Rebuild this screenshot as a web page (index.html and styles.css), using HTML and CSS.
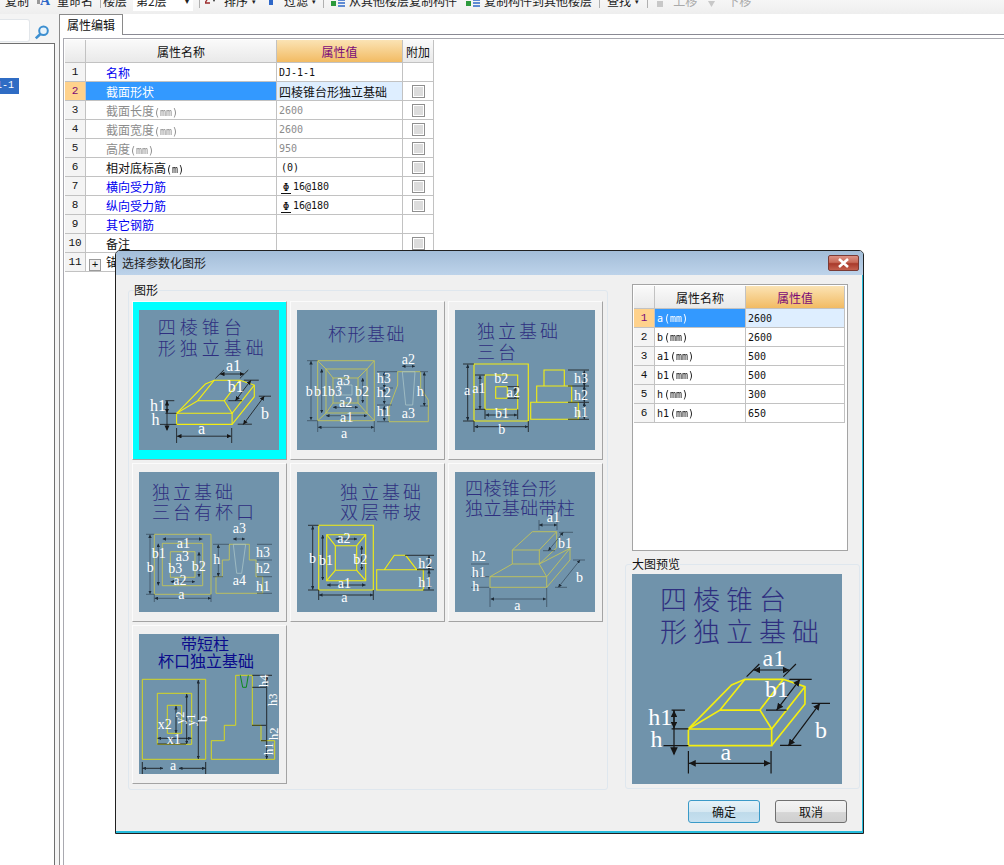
FILE: index.html
```html
<!DOCTYPE html>
<html lang="zh">
<head>
<meta charset="utf-8">
<title>选择参数化图形</title>
<link rel="stylesheet" href="styles.css">
</head>
<body>
<svg class="defs" width="0" height="0"><defs>
<marker id="ar" viewBox="0 0 6 6" refX="6" refY="3" markerWidth="4.5" markerHeight="4.5" orient="auto-start-reverse" markerUnits="userSpaceOnUse"><path d="M0 0L6 3L0 6Z" fill="#161616"/></marker>
<marker id="as" viewBox="0 0 6 6" refX="6" refY="3" markerWidth="3.5" markerHeight="3.5" orient="auto-start-reverse" markerUnits="userSpaceOnUse"><path d="M0 0L6 3L0 6Z" fill="#1d2a36"/></marker>
</defs></svg>

<div class="toolbar">
  <span class="tb ml5">复制</span>
  <svg class="ic ml8" width="15" height="13" viewBox="0 0 15 13"><text class="ic-a" x="3" y="11">A</text><rect x="0" y="5" width="3" height="5" fill="#999"/></svg>
  <span class="tb ml5">重命名</span>
  <i class="sep ml7"></i>
  <span class="tb ml2">楼层</span>
  <span class="select ml6">第2层<b class="caret">▾</b></span>
  <i class="sep ml6"></i>
  <svg class="ic ml5" width="12" height="13" viewBox="0 0 12 13"><path d="M0 1H5L0 9H5" fill="none" stroke="#9c2b2b" stroke-width="1.3"/><path d="M7 4H11L9 8Z" fill="#222"/></svg>
  <span class="tb ml7">排序</span><span class="mini">▾</span>
  <svg class="ic ml10" width="6" height="12" viewBox="0 0 6 12"><rect x="1" y="0" width="4" height="10" fill="#2f68c8"/></svg>
  <span class="tb ml10">过滤</span><span class="mini">▾</span>
  <i class="sep ml5"></i>
  <svg class="ic ml6" width="15" height="12" viewBox="0 0 15 12"><path d="M1 6H6V11H1Z" fill="#2c9a3c"/><path d="M8 2H15M8 5H15M8 8H15M8 11H15" stroke="#2f68c8" stroke-width="1.6"/></svg>
  <span class="tb ml4">从其他楼层复制构件</span>
  <svg class="ic ml8" width="15" height="12" viewBox="0 0 15 12"><path d="M1 6H6V11H1Z" fill="#2c9a3c"/><path d="M8 2H15M8 5H15M8 8H15M8 11H15" stroke="#2f68c8" stroke-width="1.6"/></svg>
  <span class="tb ml4">复制构件到其他楼层</span>
  <i class="sep ml7"></i>
  <span class="tb ml7">查找</span><span class="mini">▾</span>
  <i class="sep ml6"></i>
  <svg class="ic ml9" width="6" height="6" viewBox="0 0 6 6"><rect width="6" height="6" fill="#c8c8c8"/></svg>
  <span class="tb off ml10">上移</span>
  <svg class="ic ml11" width="7" height="6" viewBox="0 0 7 6"><path d="M0 0H7L3.5 6Z" fill="#c8c8c8"/></svg>
  <span class="tb off ml12">下移</span>
</div>

<div class="workspace">
  <aside class="left">
    <div class="search">
      <div class="search-input"></div>
      <svg class="lens" width="16" height="15" viewBox="0 0 16 15"><circle cx="9.5" cy="5.8" r="4.3" fill="#e8f3fb" stroke="#3d8fd0" stroke-width="2"/><path d="M6.4 9L1.8 13.4" stroke="#3d8fd0" stroke-width="2.6"/></svg>
    </div>
    <div class="tree"><div class="tree-sel">DJ-1-1</div></div>
  </aside>
  <div class="gutter"></div>
  <main class="main">
    <div class="tabs"><div class="tab">属性编辑</div></div>
    <div class="panel">
      <table class="grid big">
        <colgroup><col class="c-n"><col class="c-name"><col class="c-val"><col class="c-add"></colgroup>
        <tr class="hd"><td></td><td>属性名称</td><td class="hv">属性值</td><td>附加</td></tr>
        <tr><td class="n">1</td><td class="nm blue">名称</td><td class="v">DJ-1-1</td><td></td></tr>
        <tr class="sel"><td class="n">2</td><td class="nm">截面形状</td><td class="v cjk">四棱锥台形独立基础</td><td><i class="chk"></i></td></tr>
        <tr class="dis"><td class="n">3</td><td class="nm">截面长度<span class="lat">(mm)</span></td><td class="v">2600</td><td><i class="chk"></i></td></tr>
        <tr class="dis"><td class="n">4</td><td class="nm">截面宽度<span class="lat">(mm)</span></td><td class="v">2600</td><td><i class="chk"></i></td></tr>
        <tr class="dis"><td class="n">5</td><td class="nm">高度<span class="lat">(mm)</span></td><td class="v">950</td><td><i class="chk"></i></td></tr>
        <tr><td class="n">6</td><td class="nm">相对底标高<span class="lat">(m)</span></td><td class="v ind">(0)</td><td><i class="chk"></i></td></tr>
        <tr><td class="n">7</td><td class="nm blue">横向受力筋</td><td class="v"><span class="rebar">Φ</span>16@180</td><td><i class="chk"></i></td></tr>
        <tr><td class="n">8</td><td class="nm blue">纵向受力筋</td><td class="v"><span class="rebar">Φ</span>16@180</td><td><i class="chk"></i></td></tr>
        <tr><td class="n">9</td><td class="nm blue">其它钢筋</td><td class="v"></td><td></td></tr>
        <tr><td class="n">10</td><td class="nm">备注</td><td class="v"></td><td><i class="chk"></i></td></tr>
        <tr><td class="n">11</td><td class="exp"><i class="plus">+</i><span class="exp-t">锚固搭接</span></td><td class="v"></td><td></td></tr>
      </table>
    </div>
  </main>
</div>

<section class="dialog">
  <header class="titlebar">
    <span>选择参数化图形</span>
    <button class="close" type="button"><svg width="15" height="10" viewBox="0 0 15 10"><path d="M3 1L12 9M12 1L3 9" stroke="#fff" stroke-width="2.6"/></svg></button>
  </header>
  <div class="dlg-main">
    <fieldset class="group shapes">
      <legend>图形</legend>
      <div class="cards">
        <div class="card on">
          <svg class="pic" viewBox="0 0 140 140"><g id="d1">
            <rect width="140" height="140" fill="#7093ab"/>
            <text class="tt s5" x="18.7" y="24">四棱锥台</text><text class="tt s5" x="18.7" y="45">形独立基础</text>
            <g class="y2"><path d="M37.6 103.3H93.1V114.4H37.6Z"/><path d="M37.6 103.3L66.4 74L75.3 70.2H100.9L115.3 75.1V86.7L93.1 114.4"/><path d="M37.6 103.3L58.7 90.7H85.3L93.1 103.3L115.3 75.1M58.7 90.7L75.3 70.2M85.3 90.7L100.9 70.2"/></g>
            <g class="tick"><path d="M37.6 118V133M92.7 118V133M76.4 68.4L84.9 60M100.9 68.4L109.3 60M89.3 90.7H103.1M104.9 70.2H119.8M98.7 114.2H112.9M119.8 86.2H132M26.4 90.7H35.3M26.4 103.3H37.6M21 114.4H37.6M28 90.7V120"/></g>
            <g class="dim" marker-start="url(#ar)" marker-end="url(#ar)"><path d="M38 126.2H92.3"/><path d="M81 64H105"/><path d="M96.4 90.7L112 70.2"/><path d="M104.2 114.6L125.3 86.2"/><path d="M28 91V103"/></g>
            <path d="M28 121L25.5 115.5H30.5Z" fill="#161616"/>
            <text class="lb" x="59" y="124">a</text><text class="lb" x="87" y="61">a1</text><text class="lb" x="88.7" y="81.8">b1</text><text class="lb" x="122" y="109">b</text><text class="lb" x="10.9" y="100.7">h1</text><text class="lb" x="12.4" y="115">h</text>
          </g></svg>
        </div>
        <div class="card">
          <svg class="pic" viewBox="0 0 140 140">
            <rect width="140" height="140" fill="#7093ab"/>
            <text class="tt s1" x="31" y="31">杯形基础</text>
            <g class="y1"><path d="M20.7 50.7H77.3V110.7H20.7ZM29 59H70V103H29ZM36 68H61V93H36Z"/><path d="M20.7 50.7L29 59M77.3 50.7L70 59M20.7 110.7L29 103M77.3 110.7L70 103M29 59L36 68M70 59L61 68M29 103L36 93M70 103L61 93"/><path d="M100.7 61.7H123.7V78L131.3 90V111.7H92V98L100.7 75Z"/></g>
            <path class="p1" d="M42 75H55V85H42ZM105.3 61.7H118L115.7 95H108.7Z"/>
            <g class="tk"><path d="M10 50.7H20.7M10 110.7H20.7M20.7 111V122M77.3 111V122M80 61.7H100M80 78H96M80 95H95M80 111.7H92M123 61.7H131M123 96H131"/></g>
            <g class="dm" marker-start="url(#as)" marker-end="url(#as)"><path d="M14 51V110"/><path d="M24.7 59V103"/><path d="M65.7 68V93"/><path d="M21 117.3H77"/><path d="M29 105.7H70"/><path d="M36 97.3H61"/><path d="M87.3 62V78"/><path d="M87.3 78V94"/><path d="M87.3 96V111"/><path d="M105 56.3H118"/><path d="M127.3 62V96"/></g>
            <text class="ls" x="8.7" y="86">b</text><text class="ls" x="17" y="86">b1</text><text class="ls" x="31" y="86">b3</text><text class="ls" x="58" y="86">b2</text><text class="ls" x="39.7" y="75">a3</text><text class="ls" x="42" y="97.3">a2</text><text class="ls" x="43" y="111.7">a1</text><text class="ls" x="44" y="128">a</text><text class="ls" x="104.7" y="54">a2</text><text class="ls" x="79.7" y="72.7">h3</text><text class="ls" x="79.7" y="87">h2</text><text class="ls" x="79.7" y="106">h1</text><text class="ls" x="119.7" y="86">h</text><text class="ls" x="104.7" y="107.7">a3</text>
          </svg>
        </div>
        <div class="card">
          <svg class="pic" viewBox="0 0 140 140">
            <rect width="140" height="140" fill="#7093ab"/>
            <text class="tt s4" x="22" y="28">独立基础</text><text class="tt s4" x="22" y="49">三台</text>
            <g class="y2"><path d="M19 54H73.3V111H19ZM30 65H62.7V99.3H30ZM40.7 76.7H52.3V88.3H40.7Z"/><path d="M89 60H109.3V76H89ZM81.7 76H116.7V92.3H81.7ZM75.7 92.3H123.3V109.3H75.7Z"/></g>
            <g class="tick"><path d="M8 54H19M8 111H19M19 111V122M73.3 111V122M113 60H134M113 76H134M113 92.3H134M113 109.3H134M20 65H30M20 99.3H30M30 99.3V109M62.7 99.3V109M52.3 76.7H64M52.3 88.3H64"/></g>
            <g class="dim" marker-start="url(#as)" marker-end="url(#as)"><path d="M12.7 54.5V110.5"/><path d="M25 65.5V99"/><path d="M19.5 116.7H73"/><path d="M30.5 105H62"/><path d="M60 77V88"/><path d="M129.3 60.5V76"/><path d="M129.3 76V92"/><path d="M129.3 92.5V109"/></g>
            <text class="ls" x="39.3" y="73">b2</text><text class="ls" x="51.7" y="86.7">a2</text><text class="ls" x="9" y="85">a</text><text class="ls" x="17.3" y="83">a1</text><text class="ls" x="40" y="108">b1</text><text class="ls" x="43.3" y="124.3">b</text><text class="ls" x="119" y="73.3">h3</text><text class="ls" x="119" y="90">h2</text><text class="ls" x="119" y="106.7">h1</text>
          </svg>
        </div>
        <div class="card">
          <svg class="pic" viewBox="0 0 140 140">
            <rect width="140" height="140" fill="#7093ab"/>
            <text class="tt s4" x="13" y="27">独立基础</text><text class="tt s4" x="13" y="47">三台有杯口</text>
            <g class="y1"><path d="M15.3 62.3H72V122.3H15.3ZM23.3 71.3H63.7V113.7H23.3ZM31.3 79.7H56V105.3H31.3Z"/><path d="M90.3 72.3H110.3V88H117V104.7H123.7V121.3H77V104.7H83.3V88H90.3Z"/></g>
            <path class="p1" d="M94.3 72.3H106.7L102.7 101.3H97.7Z"/>
            <g class="tk"><path d="M7 62.3H15.3M7 122.3H15.3M15.3 122.3V130M72 122.3V130M74 72.3H90M74 104.7H84M118 72.3H133M118 88H133M118 104.7H133M118 121.3H133"/></g>
            <g class="dm" marker-start="url(#as)" marker-end="url(#as)"><path d="M11 62.5V122"/><path d="M19.3 71.5V113.5"/><path d="M15.5 126.3H72"/><path d="M23.5 67H63.5"/><path d="M31.5 109.7H56"/><path d="M60 80V105"/><path d="M94 67H106"/><path d="M79.3 72.5V104.5"/></g>
            <text class="ls" x="93.7" y="60.7">a3</text><text class="ls" x="37.7" y="76.3">a1</text><text class="ls" x="12.7" y="86.3">b1</text><text class="ls" x="7.7" y="99.7">b</text><text class="ls" x="36.7" y="89">a3</text><text class="ls" x="29.3" y="100.7">b3</text><text class="ls" x="52.7" y="99">b2</text><text class="ls" x="34.3" y="113">a2</text><text class="ls" x="39.3" y="127.3">a</text><text class="ls" x="74.3" y="92">h</text><text class="ls" x="117" y="85.3">h3</text><text class="ls" x="117" y="101.3">h2</text><text class="ls" x="117" y="118.7">h1</text><text class="ls" x="93.7" y="113">a4</text>
          </svg>
        </div>
        <div class="card">
          <svg class="pic" viewBox="0 0 140 140">
            <rect width="140" height="140" fill="#7093ab"/>
            <text class="tt s4" x="43" y="27">独立基础</text><text class="tt s4" x="43" y="47">双层带坡</text>
            <g class="y2"><path d="M21.7 53.3H76.3V118H21.7ZM29.7 62.7H68.7V108.7H29.7ZM38.3 73.7H59.7V98.3H38.3Z"/><path d="M29.7 62.7L38.3 73.7M68.7 62.7L59.7 73.7M29.7 108.7L38.3 98.3M68.7 108.7L59.7 98.3"/><path d="M79.7 97.7H126.3V118H79.7ZM87.3 97.7L97.3 83.3H108.7L119.7 97.7"/></g>
            <g class="tick"><path d="M11 53.3H21.7M11 118H21.7M21.7 118V128M76.3 118V128M108 83.3H137M120 97.7H137M126 118H137"/></g>
            <g class="dim" marker-start="url(#as)" marker-end="url(#as)"><path d="M15.7 54V117.5"/><path d="M25.7 63V108"/><path d="M22 123H76"/><path d="M30 113H68.5"/><path d="M38.5 67H60"/><path d="M64.7 74V98"/><path d="M132 83.5V97.5"/><path d="M132 98V117.5"/></g>
            <text class="ls" x="40.3" y="70.7">a2</text><text class="ls" x="12" y="90.7">b</text><text class="ls" x="22" y="93">b1</text><text class="ls" x="56.3" y="92.3">b2</text><text class="ls" x="40.7" y="115.7">a1</text><text class="ls" x="44.3" y="129.7">a</text><text class="ls" x="121.3" y="96.3">h2</text><text class="ls" x="121.3" y="114.7">h1</text>
          </svg>
        </div>
        <div class="card">
          <svg class="pic" viewBox="0 0 140 140">
            <rect width="140" height="140" fill="#7093ab"/>
            <text class="tt s0" x="10" y="23">四棱锥台形</text><text class="tt s0" x="10" y="43">独立基础带柱</text>
            <g class="y1"><path d="M35 104.7H91.7V115.3H35ZM57.3 78H84.3V92H57.3Z"/><path d="M57.3 78L77.3 59.7H101.7L84.3 78M101.7 59.7V75.7L84.3 92M35 104.7L57.3 92M84.3 92L91.7 104.7L115 76.3V88L91.7 115.3M84.3 92L115 76.3"/></g>
            <g class="tk"><path d="M35 116V135M91.7 116V135M84 48V58M102 48V58M104 60.3H118M88 78.7H100M100 115.3H112M118 88H130M16 92H34M16 104.7H34M16 115.3H34"/></g>
            <g class="dm" marker-start="url(#as)" marker-end="url(#as)"><path d="M35.5 127H91"/><path d="M84 53H102"/><path d="M93.3 78.7L108.3 60.3"/><path d="M103.3 115.3L125 88"/></g>
            <text class="ls" x="91.7" y="50">a1</text><text class="ls" x="103" y="75.7">b1</text><text class="ls" x="16.7" y="89">h2</text><text class="ls" x="16.7" y="104.7">h1</text><text class="ls" x="17.3" y="118.7">h</text><text class="ls" x="121" y="110.3">b</text><text class="ls" x="59.3" y="138">a</text>
          </svg>
        </div>
        <div class="card">
          <svg class="pic" viewBox="0 0 140 140">
            <rect width="140" height="140" fill="#7093ab"/>
            <text class="tn" x="42" y="15.5">带短柱</text><text class="tn" x="19" y="32.5">杯口独立基础</text>
            <g class="y3"><path d="M3.3 45.3H66.7V125.3H3.3ZM18.3 59.3H52.7V110.3H18.3ZM28.3 71.3H42.7V99.3H28.3Z"/><path d="M96.7 41.3H113.3V91.3H122V106.7H135.7V125.3H72.3V106.7H85.3V91.3H96.7Z"/></g>
            <path class="gr" d="M101.3 41.3L103.7 53.3H107.3L109.3 41.3"/>
            <g class="tk k"><path d="M3.3 128V140M66.7 128V140M113.3 41.3H133M113.3 53.3H127M113 91.3H127M122 106.7H127M18.3 110H47"/></g>
            <g class="dm k" marker-start="url(#as)" marker-end="url(#as)"><path d="M3.5 134.3H24"/><path d="M40 134.3H66.5"/><path d="M59.3 46V125"/><path d="M47.7 60V110"/><path d="M18.5 104.3H52.5"/><path d="M37 72V99"/><path d="M127.7 42V125"/></g>
            <text class="ls" x="31" y="136">a</text><text class="ls" x="27.7" y="110.3">x1</text><text class="ls" x="18.7" y="95.3">x2</text>
            <text class="lr" transform="rotate(-90 45 90)" x="45" y="90">y2</text><text class="lr" transform="rotate(-90 56 92)" x="56" y="92">y1</text><text class="lr" transform="rotate(-90 68 88)" x="68" y="88">b</text><text class="lr" transform="rotate(-90 129 53)" x="129" y="53">h4</text><text class="lr" transform="rotate(-90 138 72)" x="138" y="72">h3</text><text class="lr" transform="rotate(-90 139 106)" x="139" y="106">h2</text><text class="lr" transform="rotate(-90 134 121)" x="134" y="121">h1</text>
          </svg>
        </div>
      </div>
    </fieldset>
    <div class="side">
      <div class="tablebox">
        <table class="grid small">
          <colgroup><col class="c-n"><col class="c-sname"><col class="c-sval"></colgroup>
          <tr class="hd"><td></td><td>属性名称</td><td class="hv">属性值</td></tr>
          <tr class="sel"><td class="n">1</td><td class="v">a<span class="lat gapl">(mm)</span></td><td class="v">2600</td></tr>
          <tr><td class="n">2</td><td class="v">b<span class="lat gapl">(mm)</span></td><td class="v">2600</td></tr>
          <tr><td class="n">3</td><td class="v">a1<span class="lat gapl">(mm)</span></td><td class="v">500</td></tr>
          <tr><td class="n">4</td><td class="v">b1<span class="lat gapl">(mm)</span></td><td class="v">500</td></tr>
          <tr><td class="n">5</td><td class="v">h<span class="lat gapl">(mm)</span></td><td class="v">300</td></tr>
          <tr><td class="n">6</td><td class="v">h1<span class="lat gapl">(mm)</span></td><td class="v">650</td></tr>
        </table>
      </div>
      <fieldset class="group preview">
        <legend>大图预览</legend>
        <svg class="bigpic" viewBox="0 0 140 140"><use href="#d1"/></svg>
      </fieldset>
    </div>
  </div>
  <footer class="dlg-foot">
    <button class="btn primary" type="button">确定</button>
    <button class="btn" type="button">取消</button>
  </footer>
</section>
</body>
</html>
```
FILE: styles.css
```css
* { box-sizing: border-box; }
html, body { margin: 0; padding: 0; }
body {
  width: 1004px;
  height: 865px;
  overflow: hidden;
  background: #fff;
  color: #111;
  font: 12px/14px "Noto Sans CJK SC", "Liberation Sans", sans-serif;
  position: relative;
}
.defs { display: block; height: 0; width: 0; }

/* toolbar */
.toolbar {
  height: 14px;
  display: flex;
  align-items: flex-end;
  overflow: hidden;
  padding-bottom: 7px;
  background: linear-gradient(#f6f6f6, #eeeeee);
  white-space: nowrap;
  color: #222;
}
.tb { flex: none; line-height: 12px; }
.tb.off { color: #aaa; }
.ic { flex: none; display: block; }
.ic-a { font: bold 14px "Liberation Serif", serif; fill: #2f68c8; }
.sep { flex: none; width: 1px; height: 14px; margin-bottom: -1px; background: #b0b0b0; }
.select { flex: none; width: 60px; height: 17px; margin-bottom: -4px; padding: 0 0 4px 3px; background: #fff; display: flex; align-items: flex-end; justify-content: space-between; line-height: 12px; }
.caret { font-weight: normal; font-size: 8px; padding-right: 4px; }
.mini { flex: none; width: 10px; padding-left: 4px; font-size: 7px; line-height: 12px; }
.ml2 { margin-left: 2px; } .ml4 { margin-left: 4px; } .ml5 { margin-left: 5px; }
.ml6 { margin-left: 6px; } .ml7 { margin-left: 7px; } .ml8 { margin-left: 8px; }
.ml9 { margin-left: 9px; } .ml10 { margin-left: 10px; } .ml11 { margin-left: 11px; } .ml12 { margin-left: 12px; }

/* workspace */
.workspace { display: flex; height: 851px; }
.left { width: 55px; flex: none; border-right: 1px solid #6f6f6f; display: flex; flex-direction: column; background: #fff; }
.search { height: 30px; flex: none; background: #f4f4f4; border-bottom: 1px solid #6f6f6f; display: flex; align-items: flex-start; padding-top: 5px; margin-right: -1px; }
.search-input { width: 30px; height: 23px; background: #fff; border: 1px solid #e2e6ea; border-left: 0; border-radius: 0 3px 3px 0; }
.lens { margin: 6px 0 0 4px; }
.tree { flex: 1; padding-top: 34px; }
.tree-sel { width: 19px; height: 16px; background: #2f6cc4; color: #fff; font: 10px/16px "Liberation Mono", monospace; display: flex; justify-content: flex-end; overflow: hidden; white-space: nowrap; padding-right: 5px; }
.gutter { width: 4px; flex: none; background: #f4f4f4; }
.main { flex: 1; border-left: 1px solid #8a8a8a; display: flex; flex-direction: column; min-width: 0; }
.tabs { height: 21px; flex: none; border-bottom: 1px solid #8a8a94; margin-left: -1px; }
.tab { width: 64px; height: 21px; background: #fff; border: 1px solid #8a8a8a; border-bottom: 0; text-align: center; line-height: 19px; }
.panel { flex: 1; margin: 3px 0 0 3px; border-top: 1px solid #a9a9b0; border-left: 1px solid #a9a9b0; padding: 1px 0 0 1px; }

/* property grids */
.grid { border-collapse: separate; border-spacing: 0; table-layout: fixed; }
.big { width: 369px; }
.small { width: 211px; }
.c-n { width: 21px; } .c-name { width: 191px; } .c-val { width: 126px; } .c-add { width: 31px; }
.c-sname { width: 91px; } .c-sval { width: 99px; }
.grid td { height: 19px; padding: 0; border-right: 1px solid #c2c2c2; border-bottom: 1px solid #c2c2c2; line-height: 17px; white-space: nowrap; overflow: hidden; text-align: center; }
.grid .hd td { height: 23px; background: linear-gradient(#fafafa, #e9e9e9); line-height: 21px; color: #111; }
.grid .hd .hv { background: linear-gradient(#fbe3b4, #f2bb63); color: #7a0a78; }
.grid .n { background: #f4f4f4; font: 11px/17px "Liberation Mono", monospace; }
.grid .nm { text-align: left; padding-left: 20px; }
.grid .v { text-align: left; padding-left: 2px; font: 10px/17px "DejaVu Sans Mono", "Noto Sans CJK SC", monospace; }
.grid .v.ind { padding-left: 4px; }
.grid .v.cjk { font: 12px/17px "Noto Sans CJK SC", sans-serif; }
.blue { color: #0000f0; }
.lat { display: inline-block; font: 10px/12px "DejaVu Sans Mono", monospace; will-change: transform; }
.gapl { margin-left: 1px; }
.rebar { display: inline-block; width: 10px; margin: 0 2px 0 2px; height: 11px; line-height: 10px; text-align: center; font-size: 11px; border-bottom: 1px solid #111; vertical-align: -1px; }
.dis td { color: #8c8c8c; }
.dis .n { color: #222; }
.sel .n { background: #ffd28c; color: #7a0a78; }
.sel td:nth-child(2) { background: #3399ff; color: #fff; }
.sel td:nth-child(3) { background: #deeeff; color: #111; }
.chk { display: block; width: 13px; height: 13px; margin: 0 auto; border: 1px solid #8f8f8f; background: #dcdcdc; box-shadow: inset 0 0 0 1px #fff; }
.exp { text-align: left !important; padding-left: 3px !important; }
.plus { display: inline-block; width: 12px; height: 12px; margin-right: 5px; border: 1px solid #9a9a9a; background: #eee; font: 11px/10px "Liberation Mono", monospace; text-align: center; vertical-align: -1px; }

/* dialog */
.dialog {
  position: absolute;
  left: 115px; top: 250px;
  width: 749px; height: 584px;
  background: #f0f0f0;
  border: 1px solid #202020;
  border-radius: 5px 5px 0 0;
  box-shadow: inset -1px -2px 0 #26bcdc;
}
.titlebar { height: 24px; background: linear-gradient(#a3bdd8, #bdd3ea); display: flex; align-items: center; justify-content: space-between; padding: 0 4px 0 6px; color: #222; border-radius: 4px 4px 0 0; }
.close { width: 31px; height: 16px; padding: 0; border: 1px solid #7a3a34; border-radius: 2px; background: linear-gradient(#dd9184 0%, #c86a58 45%, #a93a2b 55%, #c4604e 100%); display: flex; align-items: center; justify-content: center; margin-top: -1px; }
.dlg-main { display: flex; align-items: flex-start; padding: 8px 0 0 12px; gap: 17px; }
.group { margin: 0; min-width: 0; border: 1px solid #dfe7ee; border-radius: 3px; }
.group legend { padding: 0; line-height: 14px; }
.shapes { width: 480px; height: 507px; padding: 4px 3px 5px 3px; }
.shapes legend { margin-left: 2px; }
.cards { display: grid; grid-template-columns: repeat(3, 155px); grid-auto-rows: 159px; gap: 3px; }
.card { background: #f0f0f0; padding: 9px 0 0 7px; border: 1px solid; border-color: #fbfbfb #a3a3a3 #a3a3a3 #fbfbfb; }
.card.on { background: #00ffff; }
.pic { display: block; width: 140px; height: 140px; margin: -1px 0 0 -1px; }
.side { width: 235px; flex: none; padding-top: 1px; }
.tablebox { width: 216px; height: 267px; margin-left: 7px; background: #fff; border: 1px solid #a4a4a4; padding: 1px; }
.preview { width: 235px; height: 232px; margin-top: 6px; padding: 3px 0 0 6px; }
.bigpic { display: block; width: 210px; height: 210px; }
.dlg-foot { display: flex; justify-content: flex-end; gap: 15px; padding: 10px 16px 0 0; }
.btn { width: 72px; height: 23px; padding: 0; font: 12px/14px "Noto Sans CJK SC", sans-serif; color: #111; border: 1px solid #707070; border-radius: 3px; background: linear-gradient(#f3f3f3 0%, #ebebeb 50%, #d6d6d6 55%, #cfcfcf 100%); }
.btn.primary { border-color: #3a9ac8; background: linear-gradient(#e6f2f8 0%, #d6e8f2 50%, #bedaea 55%, #c6e0ef 100%); }

/* drawings */
.tt { font: 300 18px "Noto Sans CJK SC", sans-serif; fill: #2f2f80; }
.tn { font: 16px "Noto Sans CJK SC", sans-serif; fill: #0b0b8c; }
.s0 { letter-spacing: 0.4px; }
.s1 { letter-spacing: 1.5px; }
.s4 { letter-spacing: 3px; }
.s5 { letter-spacing: 4px; }
.y2 path { fill: none; stroke: #f4ee10; stroke-width: 1.1; }
.y1 path { fill: none; stroke: #c3c458; stroke-width: 0.9; }
.y3 path { fill: none; stroke: #d8d820; stroke-width: 1; }
.p1 { fill: none; stroke: #a8c4c8; stroke-width: 0.8; }
.gr { fill: none; stroke: #0c8a1c; stroke-width: 1; }
.tick path { fill: none; stroke: #161616; stroke-width: 0.8; }
.dim path { fill: none; stroke: #161616; stroke-width: 0.8; }
.tk path { fill: none; stroke: #2b3b49; stroke-width: 0.6; }
.dm path { fill: none; stroke: #2b3b49; stroke-width: 0.6; }
.k path { stroke: #0c0c0c; stroke-width: 0.8; }
.lb { font: 16px "Liberation Serif", serif; fill: #fff; }
.ls { font: 14px "Liberation Serif", serif; fill: #fff; }
.lr { font: 12.5px "Liberation Serif", serif; fill: #fff; }
```
